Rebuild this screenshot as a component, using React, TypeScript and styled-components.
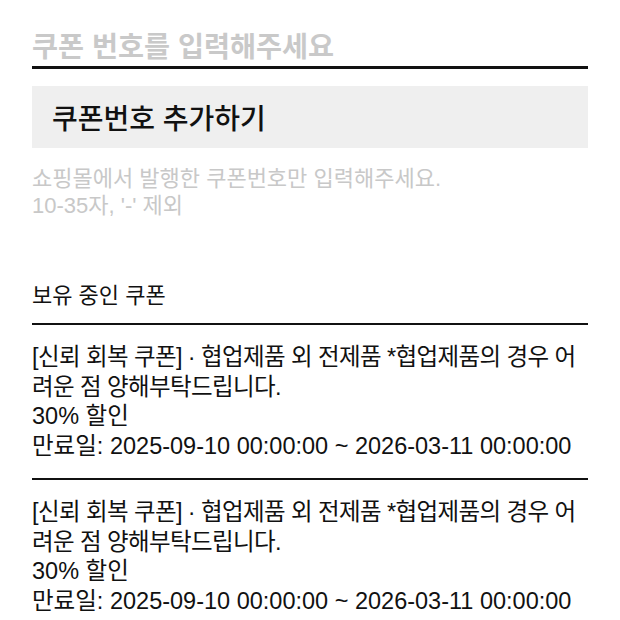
import styled, { createGlobalStyle } from "styled-components";

const GlobalStyle = createGlobalStyle`
  body {
    margin: 0;
    background: #ffffff;
    font-family: "Liberation Sans", "Noto Sans CJK KR", sans-serif;
    color: #111111;
  }
`;

const Page = styled.div`
  width: 556px;
  padding: 31px 32px 0;
`;

const CodeInput = styled.input`
  display: block;
  width: 100%;
  box-sizing: border-box;
  border: none;
  border-bottom: 3px solid #111111;
  padding: 0 0 2px;
  font-family: inherit;
  font-size: 28.3px;
  font-weight: 600;
  color: #111111;
  outline: none;
  background: transparent;

  &::placeholder {
    color: #c9c9c9;
  }
`;

const AddButton = styled.button`
  display: block;
  width: 100%;
  height: 62px;
  margin-top: 17px;
  padding: 0 20px;
  border: none;
  background: #efefef;
  text-align: left;
  font-family: inherit;
  font-size: 28px;
  font-weight: 500;
  color: #111111;
`;

const Helper = styled.p`
  margin: 17px 0 0;
  font-size: 22px;
  line-height: 27px;
  color: #c8c8c8;
`;

const SectionTitle = styled.h3`
  margin: 63px 0 0;
  padding-bottom: 13px;
  border-bottom: 2px solid #111111;
  font-size: 22px;
  font-weight: 400;
  line-height: 28px;
`;

const CouponList = styled.ul`
  list-style: none;
  margin: 0;
  padding: 0;
`;

const CouponItem = styled.li`
  padding: 18px 0 17px;
  font-size: 23.5px;
  line-height: 29.5px;

  & + & {
    border-top: 2px solid #111111;
  }
`;

const Line = styled.div<{ $tight?: boolean }>`
  letter-spacing: ${(p) => (p.$tight ? "-0.6px" : "0")};
`;

type Coupon = {
  name: string;
  desc: string;
  discount: string;
  from: string;
  to: string;
};

const coupons: Coupon[] = [
  {
    name: "신뢰 회복 쿠폰",
    desc: "협업제품 외 전제품 *협업제품의 경우 어려운 점 양해부탁드립니다.",
    discount: "30% 할인",
    from: "2025-09-10 00:00:00",
    to: "2026-03-11 00:00:00",
  },
  {
    name: "신뢰 회복 쿠폰",
    desc: "협업제품 외 전제품 *협업제품의 경우 어려운 점 양해부탁드립니다.",
    discount: "30% 할인",
    from: "2025-09-10 00:00:00",
    to: "2026-03-11 00:00:00",
  },
];

function App() {
  return (
    <>
      <GlobalStyle />
      <Page>
        <CodeInput placeholder="쿠폰 번호를 입력해주세요" />
        <AddButton>쿠폰번호 추가하기</AddButton>
        <Helper>
          쇼핑몰에서 발행한 쿠폰번호만 입력해주세요.
          <br />
          10-35자, '-' 제외
        </Helper>
        <SectionTitle>보유 중인 쿠폰</SectionTitle>
        <CouponList>
          {coupons.map((c, i) => (
            <CouponItem key={i}>
              <Line $tight>
                [{c.name}] · {c.desc}
              </Line>
              <Line>{c.discount}</Line>
              <Line>
                만료일: {c.from} ~ {c.to}
              </Line>
            </CouponItem>
          ))}
        </CouponList>
      </Page>
    </>
  );
}

export default App;
